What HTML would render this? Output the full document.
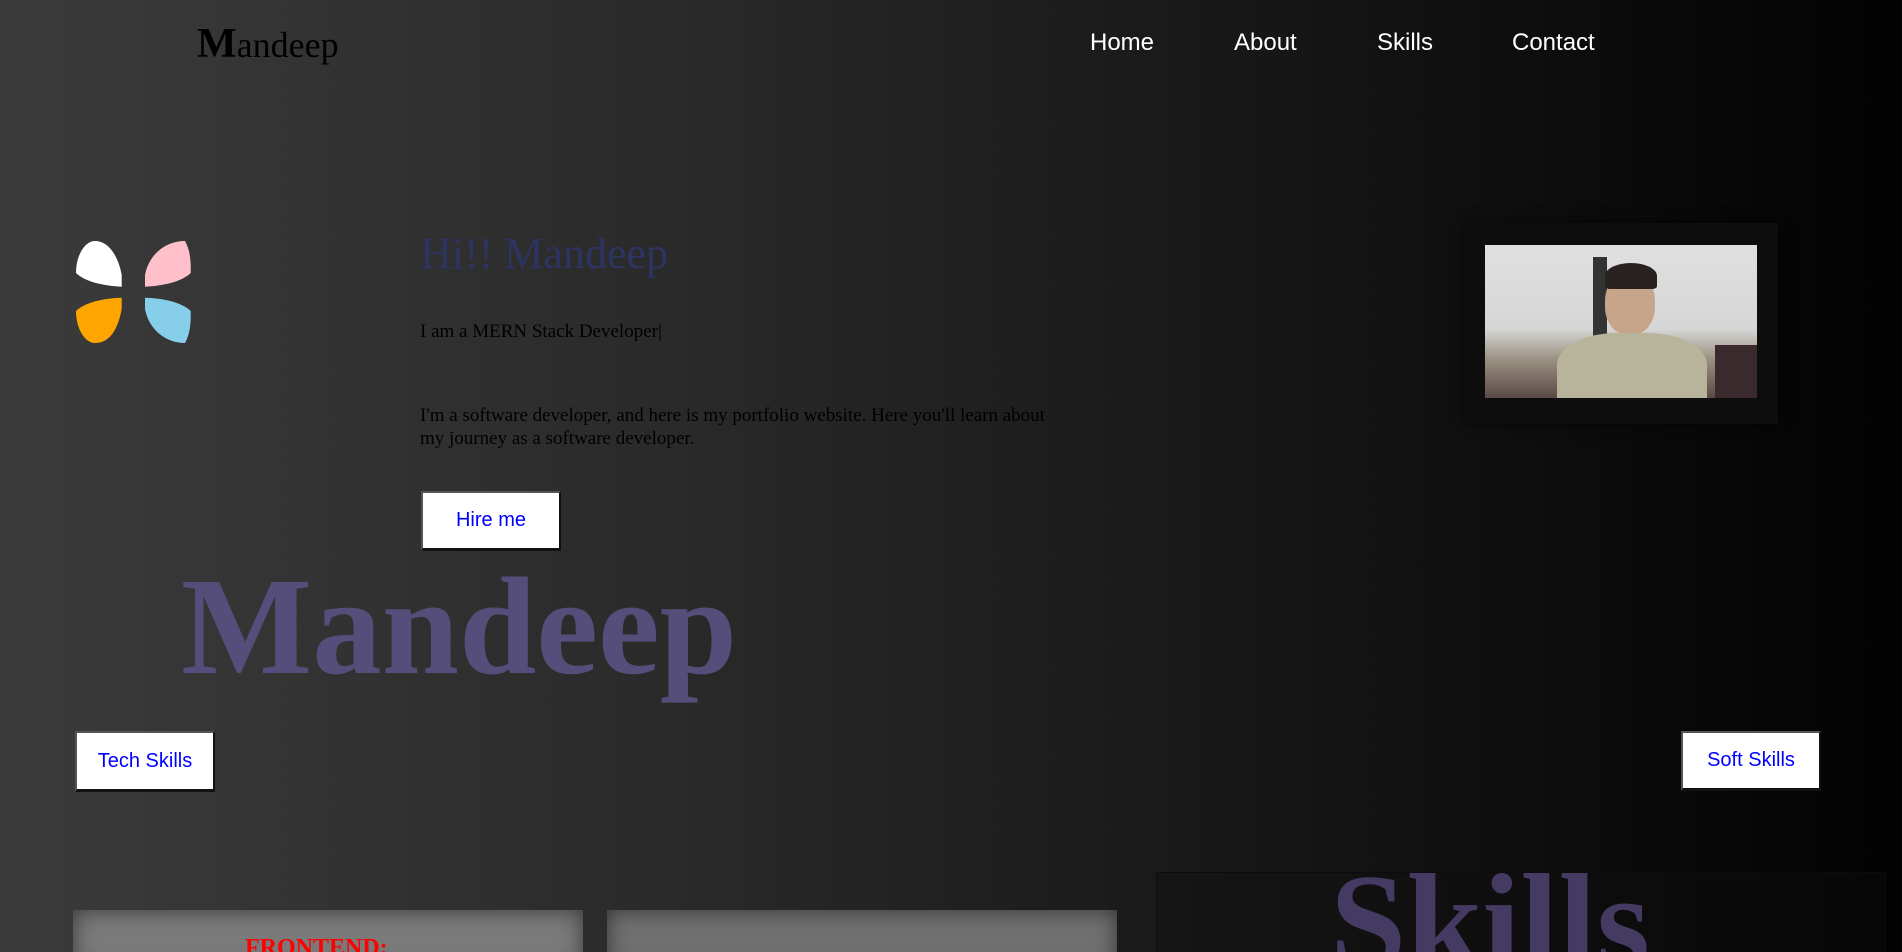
<!DOCTYPE html>
<html><head><meta charset="utf-8"><style>
*{margin:0;padding:0;box-sizing:border-box}
html,body{width:1902px;height:952px;overflow:hidden}
body{background:linear-gradient(90deg,#3b3b3b 0%,#2a2a2a 35%,#141414 70%,#020202 100%);font-family:"Liberation Serif",serif;position:relative}
.a{position:absolute;white-space:nowrap}
.nav{font-family:"Liberation Sans",sans-serif;color:#fff;font-size:24px;top:29px}
.btn{position:absolute;background:#fff;border:2px solid #fff;border-right:2px solid #111;border-bottom:3px solid #111;border-top-color:#555;border-left-color:#555;color:#00f;font-family:"Liberation Sans",sans-serif;font-size:20px;display:flex;align-items:center;justify-content:center}
.p{position:absolute}
</style></head><body>
<div class="a" style="left:197px;top:20px;font-size:36px;color:#000"><b style="font-size:42px">M</b>andeep</div>
<div class="a nav" style="left:1090px">Home</div>
<div class="a nav" style="left:1234px">About</div>
<div class="a nav" style="left:1377px">Skills</div>
<div class="a nav" style="left:1512px">Contact</div>

<svg class="p" style="left:60px;top:230px" width="150" height="130" viewBox="0 0 150 130">
<path fill="#fff" d="M61.7,56.7 L61.7,45 C58,25 48,11 35,11 C25,11 16,25 16,43 C25,52 45,56 61.7,56.7Z"/>
<path fill="#ffc0cb" d="M85,56.7 L85,45 C88.7,25 105,11 125,11 C130,20 131,30 130.7,43 C121.7,52 101.7,56 85,56.7Z"/>
<path fill="#ffa500" d="M61.7,67.7 L61.7,79 C58,99 50,113 35,113 C25,113 16,99 16,81 C25,72 45,68 61.7,67.7Z"/>
<path fill="#87ceeb" d="M85,67.7 L85,79 C88.7,99 105,113 125,113 C130,104 131,94 130.7,81 C121.7,72 101.7,68 85,67.7Z"/>
</svg>

<div class="a" style="left:420px;top:228px;font-size:44px;color:#2d3461">Hi!! Mandeep</div>
<div class="a" style="left:420px;top:321px;font-size:19px;color:#000">I am a MERN Stack Developer|</div>
<div class="a" style="left:420px;top:404px;font-size:19px;color:#000;white-space:normal;width:640px;line-height:23px">I'm a software developer, and here is my portfolio website. Here you'll learn about my journey as a software developer.</div>
<div class="btn" style="left:421px;top:491px;width:140px;height:60px">Hire me</div>

<div class="a" style="left:181px;top:558px;font-size:139px;font-weight:bold;color:#564e7a;line-height:1">Mandeep</div>

<div class="btn" style="left:75px;top:731px;width:140px;height:61px">Tech Skills</div>
<div class="btn" style="left:1681px;top:731px;width:140px;height:60px">Soft Skills</div>

<div class="p" style="left:1465px;top:223px;width:313px;height:201px;background:#0d0d0d;box-shadow:0 0 12px rgba(0,0,0,.6)"></div>
<div class="p" style="left:1485px;top:245px;width:272px;height:153px;background:linear-gradient(180deg,#e0e0e0 0%,#d6d6d6 55%,#9a9080 75%,#5a4a48 100%);overflow:hidden">
 <div class="p" style="left:108px;top:12px;width:14px;height:85px;background:#333"></div>
 <div class="p" style="left:120px;top:28px;width:50px;height:62px;background:#c7a58a;border-radius:45%"></div>
 <div class="p" style="left:120px;top:18px;width:52px;height:26px;background:#2a2220;border-radius:50% 50% 10% 10%"></div>
 <div class="p" style="left:72px;top:88px;width:150px;height:80px;background:#b8b49c;border-radius:40% 40% 0 0"></div>
 <div class="p" style="left:230px;top:100px;width:42px;height:60px;background:#3a2a2e"></div>
</div>

<div class="p" style="left:1156px;top:872px;width:730px;height:100px;border:1px solid #0c0c0c;background:rgba(14,14,14,.4)"></div>
<div class="a" style="left:1330px;top:854px;font-size:137px;font-weight:bold;color:#453a62;line-height:1">Skills</div>

<div class="p" style="left:73px;top:910px;width:510px;height:60px;background:#7a7a7a;box-shadow:inset 0 0 22px rgba(0,0,0,.55)"></div>
<div class="a" style="left:245px;top:935px;font-size:24px;font-weight:bold;color:#f00">FRONTEND:</div>
<div class="p" style="left:607px;top:910px;width:510px;height:60px;background:#707070;box-shadow:inset 0 0 22px rgba(0,0,0,.55)"></div>
</body></html>
